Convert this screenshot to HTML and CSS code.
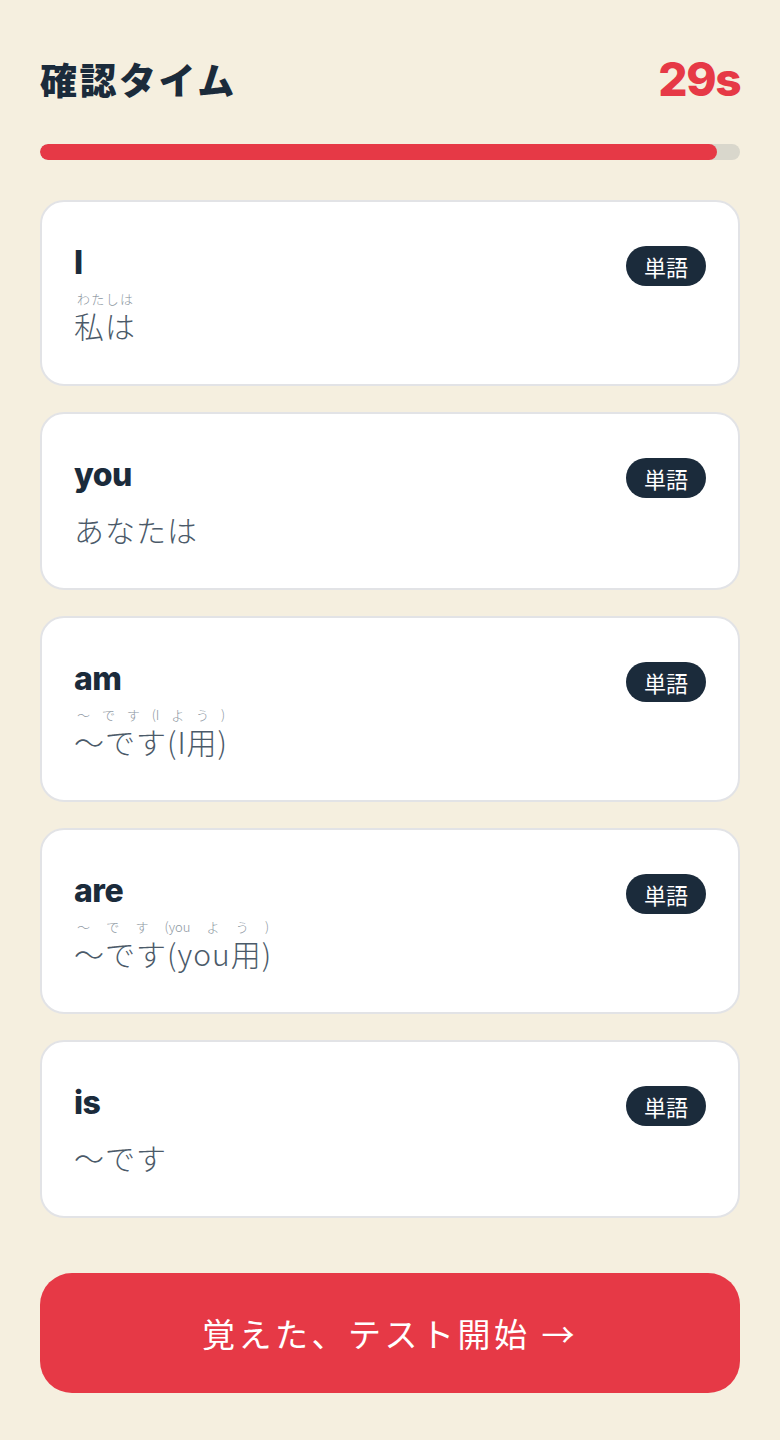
FILE: index.html
```html
<!DOCTYPE html>
<html lang="ja">
<head>
<meta charset="utf-8">
<title>確認タイム</title>
<link rel="stylesheet" href="styles.css">
</head>
<body>
<div class="page">
  <div class="top">
    <h1 class="title">確認タイム</h1>
    <div class="timer">29s</div>
  </div>
  <div class="bar"><div class="bar_fill" style="width:96.67%"></div></div>

  <ul class="cards">
    <li class="card">
      <div class="card_head"><span class="word">I</span><span class="tag">単語</span></div>
      <div class="mean kana"><ruby>私は<rt>わたしは</rt></ruby></div>
    </li>
    <li class="card">
      <div class="card_head"><span class="word">you</span><span class="tag">単語</span></div>
      <div class="mean plain">あなたは</div>
    </li>
    <li class="card">
      <div class="card_head"><span class="word">am</span><span class="tag">単語</span></div>
      <div class="mean kana"><ruby>〜です(I用)<rt>〜です(Iよう)</rt></ruby></div>
    </li>
    <li class="card">
      <div class="card_head"><span class="word">are</span><span class="tag">単語</span></div>
      <div class="mean kana"><ruby>〜です(you用)<rt>〜です(youよう)</rt></ruby></div>
    </li>
    <li class="card">
      <div class="card_head"><span class="word">is</span><span class="tag">単語</span></div>
      <div class="mean plain">〜です</div>
    </li>
  </ul>

  <button class="start">覚えた、テスト開始 →</button>
</div>
</body>
</html>
```

FILE: styles.css
```css
*{margin:0;padding:0;box-sizing:border-box;}
li{list-style:none;}
body{background:#f5efdf;font-family:"Noto Sans CJK JP",sans-serif;color:#1b2b3b;}
.page{padding:49px 40px 48px;}
.top{display:flex;justify-content:space-between;align-items:center;height:60px;}
.title{font-size:37px;font-weight:900;letter-spacing:2.5px;color:#1b2b3b;}
.timer{font-family:Inter,"Noto Sans",sans-serif;font-size:46px;font-weight:800;color:#e63946;letter-spacing:-1.5px;}
.bar{height:16px;border-radius:8px;background:#d9d7cc;margin-top:35px;overflow:hidden;}
.bar_fill{height:16px;border-radius:8px;background:#e63946;}

.cards{margin-top:40px;display:flex;flex-direction:column;gap:26px;}
.card{background:#fff;border:2px solid #e2e3e6;border-radius:24px;padding:32px 32px 36px;}
.card_head{display:flex;justify-content:space-between;align-items:center;height:56px;}
.word{font-family:Inter,"Noto Sans",sans-serif;font-size:32px;font-weight:800;color:#1b2b3b;letter-spacing:-0.5px;}
.tag{background:#1b2b3b;color:#fff;font-size:22px;font-weight:400;line-height:40px;height:40px;padding:0 18px;border-radius:20px;margin-top:8px;}
.mean{font-size:30px;font-weight:300;color:#4b5a69;line-height:36px;letter-spacing:1px;}
.mean.plain{margin-top:4px;line-height:46px;}

/* ふりがな：上に小さく、幅いっぱいに広げる */
.mean.kana{display:flex;padding-bottom:6px;}
.mean.kana ruby{display:flex;flex-direction:column-reverse;line-height:34px;}
.mean.kana rt{display:block;font-size:13px;color:#8d979f;line-height:18px;letter-spacing:0;padding:0 3px;text-align:justify;text-align-last:justify;}

.start{display:block;width:100%;height:120px;margin-top:55px;border:none;border-radius:32px;background:#e63946;color:#fff;font-family:"Noto Sans CJK JP",sans-serif;font-size:33px;font-weight:400;letter-spacing:3.5px;}
```
